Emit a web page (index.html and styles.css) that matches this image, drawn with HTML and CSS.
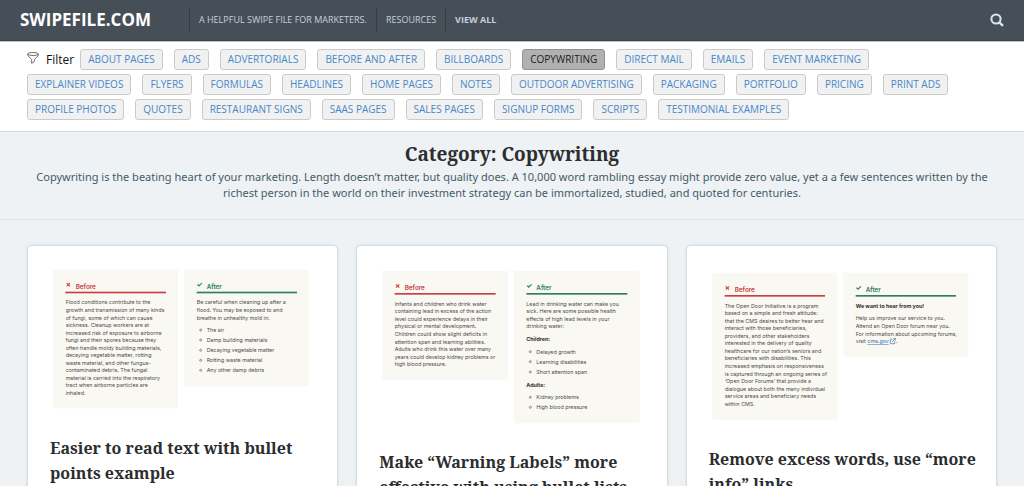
FILE: index.html
```html
<!DOCTYPE html>
<html lang="en">
<head>
<meta charset="utf-8">
<meta name="viewport" content="width=device-width, initial-scale=1">
<title>Category: Copywriting</title>
<link rel="stylesheet" href="styles.css">
</head>
<body>
<header class="topbar">
  <a class="logo" href="#">SWIPEFILE.COM</a>
  <nav class="nav">
    <a href="#">A HELPFUL SWIPE FILE FOR MARKETERS.</a>
    <a href="#">RESOURCES</a>
    <a class="strong" href="#">VIEW ALL</a>
  </nav>
  <button class="search" type="button" aria-label="Search">
    <svg viewBox="0 0 14 14" width="14" height="14"><circle cx="6" cy="6" r="4.6" fill="none" stroke="currentColor" stroke-width="2"/><path d="M9.3 9.3 13 12.8" stroke="currentColor" stroke-width="2.4"/></svg>
  </button>
</header>

<nav class="filters" aria-label="Filter">
  <span class="filter-label">
    <svg viewBox="0 0 36 36" width="12" height="12" fill="none" stroke="#555" stroke-width="2.5" stroke-linejoin="round"><ellipse cx="18" cy="6" rx="16" ry="4.5"/><path d="M2 6v4l12 13v11l8-5v-6l12-13V6"/></svg>
    Filter
  </span>
  <a class="chip" href="#">ABOUT PAGES</a>
  <a class="chip" href="#">ADS</a>
  <a class="chip" href="#">ADVERTORIALS</a>
  <a class="chip" href="#">BEFORE AND AFTER</a>
  <a class="chip" href="#">BILLBOARDS</a>
  <a class="chip active" href="#" aria-current="page">COPYWRITING</a>
  <a class="chip" href="#">DIRECT MAIL</a>
  <a class="chip" href="#">EMAILS</a>
  <a class="chip" href="#">EVENT MARKETING</a>
  <a class="chip" href="#">EXPLAINER VIDEOS</a>
  <a class="chip" href="#">FLYERS</a>
  <a class="chip" href="#">FORMULAS</a>
  <a class="chip" href="#">HEADLINES</a>
  <a class="chip" href="#">HOME PAGES</a>
  <a class="chip" href="#">NOTES</a>
  <a class="chip" href="#">OUTDOOR ADVERTISING</a>
  <a class="chip" href="#">PACKAGING</a>
  <a class="chip" href="#">PORTFOLIO</a>
  <a class="chip" href="#">PRICING</a>
  <a class="chip" href="#">PRINT ADS</a>
  <a class="chip" href="#">PROFILE PHOTOS</a>
  <a class="chip" href="#">QUOTES</a>
  <a class="chip" href="#">RESTAURANT SIGNS</a>
  <a class="chip" href="#">SAAS PAGES</a>
  <a class="chip" href="#">SALES PAGES</a>
  <a class="chip" href="#">SIGNUP FORMS</a>
  <a class="chip" href="#">SCRIPTS</a>
  <a class="chip" href="#">TESTIMONIAL EXAMPLES</a>
</nav>

<section class="intro">
  <h1>Category: Copywriting</h1>
  <p>Copywriting is the beating heart of your marketing. Length doesn’t matter, but quality does. A 10,000 word rambling essay might provide zero value, yet a a few sentences written by the richest person in the world on their investment strategy can be immortalized, studied, and quoted for centuries.</p>
</section>

<main class="grid">
  <article class="card">
    <svg class="picture" viewBox="0 0 796 460">
      <defs>
        <path id="cross" d="M0 2 2 0 6 3.500 10 0l2 2-3.500 4L12 10l-2 2-4-3.500L2 12 0 10 3.500 6z"/>
        <path id="check" d="M0 6 3 4l3 3L14 0l2 2L6 12z"/>
      </defs>
      <rect class="panel" x="9" y="8" width="375" height="416"/>
      <use class="before" href="#cross" x="49" y="47"/>
      <text class="label before" x="77" y="65">Before</text>
      <rect class="before" x="46" y="74" width="302" height="5"/>
      <text class="copy">
        <tspan x="47" y="112">Flood conditions contribute to the</tspan>
        <tspan x="47" y="135">growth and transmission of many kinds</tspan>
        <tspan x="47" y="158">of fungi, some of which can cause</tspan>
        <tspan x="47" y="180">sickness. Cleanup workers are at</tspan>
        <tspan x="47" y="203">increased risk of exposure to airborne</tspan>
        <tspan x="47" y="225">fungi and their spores because they</tspan>
        <tspan x="47" y="248">often handle moldy building materials,</tspan>
        <tspan x="47" y="270">decaying vegetable matter, rotting</tspan>
        <tspan x="47" y="293">waste material, and other fungus-</tspan>
        <tspan x="47" y="316">contaminated debris. The fungal</tspan>
        <tspan x="47" y="338">material is carried into the respiratory</tspan>
        <tspan x="47" y="361">tract when airborne particles are</tspan>
        <tspan x="47" y="383">inhaled.</tspan>
      </text>
      <rect class="panel" x="403" y="8" width="374" height="350"/>
      <use class="after" href="#check" x="441" y="47"/>
      <text class="label after" x="470" y="65">After</text>
      <rect class="after" x="440" y="74" width="301" height="5"/>
      <text class="copy">
        <tspan x="440" y="112">Be careful when cleaning up after a</tspan>
        <tspan x="440" y="135">flood. You may be exposed to and</tspan>
        <tspan x="440" y="158">breathe in unhealthy mold in:</tspan>
        <tspan x="470" y="195">The air</tspan>
        <tspan x="470" y="225">Damp building materials</tspan>
        <tspan x="470" y="256">Decaying vegetable matter</tspan>
        <tspan x="470" y="286">Rotting waste material</tspan>
        <tspan x="470" y="316">Any other damp debris</tspan>
      </text>
      <g class="dots"><circle cx="452" cy="189" r="3"/><circle cx="452" cy="219" r="3"/><circle cx="452" cy="250" r="3"/><circle cx="452" cy="280" r="3"/><circle cx="452" cy="310" r="3"/></g>
    </svg>
    <h2><a href="#">Easier to read text with bullet points example</a></h2>
  </article>

  <article class="card">
    <svg class="picture" viewBox="0 0 796 500">
      <rect class="panel" x="10" y="12" width="377" height="327"/>
      <use class="before" href="#cross" x="50" y="51"/>
      <text class="label before" x="77" y="69">Before</text>
      <rect class="before" x="47" y="78" width="303" height="5"/>
      <text class="copy">
        <tspan x="47" y="116">Infants and children who drink water</tspan>
        <tspan x="47" y="139">containing lead in excess of the action</tspan>
        <tspan x="47" y="162">level could experience delays in their</tspan>
        <tspan x="47" y="184">physical or mental development.</tspan>
        <tspan x="47" y="207">Children could show slight deficits in</tspan>
        <tspan x="47" y="230">attention span and learning abilities.</tspan>
        <tspan x="47" y="252">Adults who drink this water over many</tspan>
        <tspan x="47" y="275">years could develop kidney problems or</tspan>
        <tspan x="47" y="298">high blood pressure.</tspan>
      </text>
      <rect class="panel" x="405" y="12" width="377" height="457"/>
      <use class="after" href="#check" x="443" y="51"/>
      <text class="label after" x="472" y="69">After</text>
      <rect class="after" x="442" y="78" width="303" height="5"/>
      <text class="copy">
        <tspan x="442" y="116">Lead in drinking water can make you</tspan>
        <tspan x="442" y="139">sick. Here are some possible health</tspan>
        <tspan x="442" y="162">effects of high lead levels in your</tspan>
        <tspan x="442" y="184">drinking water:</tspan>
        <tspan class="bold" x="442" y="222">Children:</tspan>
        <tspan x="472" y="260">Delayed growth</tspan>
        <tspan x="472" y="290">Learning disabilities</tspan>
        <tspan x="472" y="321">Short attention span</tspan>
        <tspan class="bold" x="442" y="359">Adults:</tspan>
        <tspan x="472" y="397">Kidney problems</tspan>
        <tspan x="472" y="427">High blood pressure</tspan>
      </text>
      <g class="dots"><circle cx="454" cy="254" r="3"/><circle cx="454" cy="284" r="3"/><circle cx="454" cy="315" r="3"/><circle cx="454" cy="391" r="3"/><circle cx="454" cy="421" r="3"/></g>
    </svg>
    <h2><a href="#">Make “Warning Labels” more effective with using bullet lists</a></h2>
  </article>

  <article class="card">
    <svg class="picture" viewBox="0 0 796 492">
      <rect class="panel" x="10" y="17" width="376" height="441"/>
      <use class="before" href="#cross" x="49" y="57"/>
      <text class="label before" x="77" y="75">Before</text>
      <rect class="before" x="47" y="84" width="301" height="5"/>
      <text class="copy">
        <tspan x="47" y="122">The Open Door Initiative is a program</tspan>
        <tspan x="47" y="145">based on a simple and fresh attitude:</tspan>
        <tspan x="47" y="167">that the CMS desires to better hear and</tspan>
        <tspan x="47" y="190">interact with those beneficiaries,</tspan>
        <tspan x="47" y="213">providers, and other stakeholders</tspan>
        <tspan x="47" y="235">interested in the delivery of quality</tspan>
        <tspan x="47" y="258">healthcare for our nation’s seniors and</tspan>
        <tspan x="47" y="280">beneficiaries with disabilities. This</tspan>
        <tspan x="47" y="303">increased emphasis on responsiveness</tspan>
        <tspan x="47" y="326">is captured through an ongoing series of</tspan>
        <tspan x="47" y="348">‘Open Door Forums’ that provide a</tspan>
        <tspan x="47" y="371">dialogue about both the many individual</tspan>
        <tspan x="47" y="393">service areas and beneficiary needs</tspan>
        <tspan x="47" y="416">within CMS.</tspan>
      </text>
      <rect class="panel" x="403" y="17" width="375" height="252"/>
      <use class="after" href="#check" x="441" y="57"/>
      <text class="label after" x="470" y="75">After</text>
      <rect class="after" x="440" y="84" width="301" height="5"/>
      <text class="copy">
        <tspan class="bold" x="440" y="122">We want to hear from you!</tspan>
        <tspan x="440" y="160">Help us improve our service to you.</tspan>
        <tspan x="440" y="183">Attend an Open Door forum near you.</tspan>
        <tspan x="440" y="206">For information about upcoming forums,</tspan>
        <tspan x="440" y="229">visit</tspan>
        <tspan class="link" x="475" y="229">cms.gov</tspan>
        <tspan x="561" y="229">.</tspan>
      </text>
      <path d="M550 217h-6v13h13v-7M549 225l10-10M553 215h6v6" fill="none" stroke="#2f72ad" stroke-width="2"/>
    </svg>
    <h2><a href="#">Remove excess words, use “more info” links</a></h2>
  </article>
</main>
</body>
</html>
```
FILE: styles.css
```css
* { box-sizing: border-box; }

body {
  margin: 0;
  background: #eef2f5;
  color: #2b2d2f;
  font-family: "Open Sans", "Noto Sans", sans-serif;
}

a { color: inherit; text-decoration: none; }

.topbar {
  display: flex;
  align-items: center;
  height: 42px;
  padding: 0 20px 2px;
  background: #464f58;
  border-bottom: 1px solid #bfc3c6;
  box-shadow: inset 0 -1px #39424a;
}

.logo {
  color: #fff;
  font-size: 17px;
  font-weight: 700;
  line-height: 24px;
}

.nav {
  display: flex;
  margin-left: 38px;
  color: #c3d1d9;
  font-size: 9px;
  line-height: 25px;
}

.nav a {
  padding: 0 9px;
  border-left: 1px solid #353c43;
}

.nav .strong { font-weight: 700; }

.search {
  display: flex;
  margin-left: auto;
  padding: 0;
  border: 0;
  background: none;
  color: #d3e8f3;
}

.filters {
  display: flex;
  flex-wrap: wrap;
  gap: 4px 11px;
  padding: 7px 60px 11px 27px;
  background: #fff;
  border-bottom: 1px solid #d9dbdc;
}

.filter-label {
  display: flex;
  align-items: center;
  gap: 7px;
  margin-right: -5px;
  color: #111;
  font-size: 12px;
  line-height: 21px;
}

.filter-label svg { margin-bottom: 3px; }

.chip {
  padding: 0 7px;
  border: 1px solid #cbcbcb;
  border-radius: 3px;
  background: #f1f1f1;
  color: #4688c9;
  font-size: 10px;
  line-height: 19px;
}

.chip.active {
  border-color: #929292;
  background: #b1b1b1;
  color: #1c1c1c;
}

.intro {
  padding: 8px 16px 18px;
  border-bottom: 1px solid #e1e5e7;
  text-align: center;
}

.intro h1 {
  margin: 0 0 1px;
  font: 700 19px/28px "Noto Serif", "Droid Serif", "DejaVu Serif Condensed", "DejaVu Serif", serif;
}

.intro p {
  max-width: 980px;
  margin: 0 auto;
  color: #455a67;
  font-family: "Noto Sans", "Open Sans", sans-serif;
  font-size: 11px;
  line-height: 16px;
}

.grid {
  display: grid;
  grid-template-columns: repeat(3, 1fr);
  align-items: start;
  gap: 20px;
  padding: 26px 28px;
}

.card {
  padding: 21px 12px 22px 22px;
  border-radius: 4px;
  background: #fff;
  box-shadow: 0 0 3px rgba(60, 75, 85, 0.35);
}

.card h2 {
  margin: 16px 0 0;
  font: 700 16px/25px "Noto Serif", "Droid Serif", "DejaVu Serif Condensed", "DejaVu Serif", serif;
}

.picture {
  display: block;
  width: calc(100% - 10px);
  height: auto;
  font-family: Inter, "Open Sans", sans-serif;
}

.panel { fill: #faf8f3; }
.before { fill: #c8403f; }
.after { fill: #2e8060; }
.label { font-size: 19px; font-weight: 600; }
.copy { fill: #4c4b4a; font-size: 16px; }
.copy .bold { fill: #2f2e2e; font-weight: 700; }
.copy .link { fill: #2f72ad; text-decoration: underline; }
.dots { fill: none; stroke: #5c5b59; stroke-width: 2; }
```
